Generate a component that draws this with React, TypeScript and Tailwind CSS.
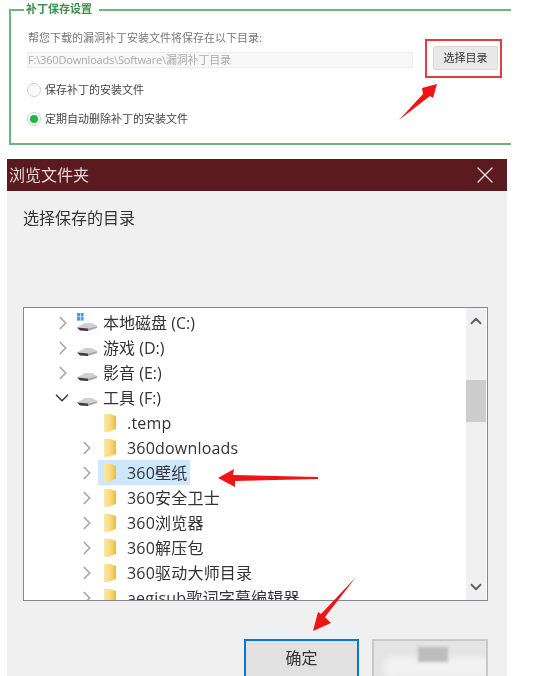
import { ChevronDown, ChevronRight, ChevronUp, X } from 'lucide-react';

type TreeRow = {
  label: string;
  kind: 'drive' | 'folder';
  open?: boolean;
  leaf?: boolean;
  selected?: boolean;
  win?: boolean;
};

const rows: TreeRow[] = [
  { label: '本地磁盘 (C:)', kind: 'drive', win: true },
  { label: '游戏 (D:)', kind: 'drive' },
  { label: '影音 (E:)', kind: 'drive' },
  { label: '工具 (F:)', kind: 'drive', open: true },
  { label: '.temp', kind: 'folder', leaf: true },
  { label: '360downloads', kind: 'folder' },
  { label: '360壁纸', kind: 'folder', selected: true },
  { label: '360安全卫士', kind: 'folder' },
  { label: '360浏览器', kind: 'folder' },
  { label: '360解压包', kind: 'folder' },
  { label: '360驱动大师目录', kind: 'folder' },
  { label: 'aegisub歌词字幕编辑器', kind: 'folder' },
];

function DriveIcon({ win }: { win?: boolean }) {
  return (
    <svg width="20" height="20" viewBox="0 0 20 20" className="shrink-0">
      {win && (
        <g fill="#29a8e8">
          <rect x="0" y="0" width="3" height="3.5" />
          <rect x="3.6" y="0" width="3" height="3.5" />
          <rect x="0" y="4.1" width="3" height="3.5" />
          <rect x="3.6" y="4.1" width="3" height="3.5" />
        </g>
      )}
      <path d="M0 14.5 L8 10 H15 L20 13 L11 15.5 Z" fill="#cfcfcf" />
      <path d="M0 14.5 L11 15.5 L11 18 L3 17.5 Z" fill="#3c3c3c" />
      <path d="M11 15.5 L20 13 V15 L11 18 Z" fill="#a8a8a8" />
    </svg>
  );
}

function FolderIcon() {
  return (
    <svg width="13" height="18" viewBox="0 0 13 18" className="shrink-0">
      <defs>
        <linearGradient id="folderFill" x1="0" y1="0" x2="1" y2="0">
          <stop offset="0" stopColor="#fbe8a8" />
          <stop offset="0.6" stopColor="#f8d675" />
          <stop offset="1" stopColor="#e9b93f" />
        </linearGradient>
      </defs>
      <path d="M0 0 H6 L12 2 V15 L4 18 H0 Z" fill="url(#folderFill)" />
    </svg>
  );
}

function Row({ row }: { row: TreeRow }) {
  const isDrive = row.kind === 'drive';
  return (
    <div className={`flex h-[25px] items-center ${isDrive ? 'pl-[32px]' : 'pl-[56px]'}`}>
      <span className="flex w-[17px] shrink-0 items-center justify-start">
        {row.open ? (
          <ChevronDown size={22} strokeWidth={1.8} className="-ml-[5px] shrink-0 text-[#404040]" />
        ) : row.leaf ? null : (
          <ChevronRight size={22} strokeWidth={1.8} className="-ml-[4px] shrink-0 text-[#a6a6a6]" />
        )}
      </span>
      {isDrive ? (
        <>
          <span className="mr-[6px] ml-[4px] flex items-center">
            <DriveIcon win={row.win} />
          </span>
          <span className="text-[16px] whitespace-nowrap text-[#333]">{row.label}</span>
        </>
      ) : (
        <span className={`ml-[1px] flex h-[25px] items-center pr-[3px] ${row.selected ? 'bg-[#cce8ff]' : ''}`}>
          <span className="mr-[10px] ml-[6px] flex">
            <FolderIcon />
          </span>
          <span className="text-[16px] tracking-[0.2px] whitespace-nowrap text-[#333]">{row.label}</span>
        </span>
      )}
    </div>
  );
}

function Radio({ on, label }: { on?: boolean; label: string }) {
  return (
    <div className="flex h-[20px] items-center gap-[4px]">
      <span className="flex h-[14px] w-[14px] items-center justify-center rounded-full border border-[#d0d0d0] bg-[#fafafa]">
        {on && <span className="h-[8px] w-[8px] rounded-full bg-[#1fb842]" />}
      </span>
      <span className="text-[11px] text-[#444]">{label}</span>
    </div>
  );
}

export default function App() {
  return (
    <div className="relative h-[676px] w-[541px] overflow-hidden bg-white [font-family:'Open_Sans','Noto_Sans_CJK_SC',sans-serif]">
      <section className="relative mt-[9px] ml-[9px] h-[136px] w-[502px] border-y-2 border-l-2 border-[#6db57f] pt-[19px] pl-[17px] blur-[0.4px]">
        <span className="absolute -top-[10px] left-[13px] bg-white pr-[7px] pl-[2px] text-[11px] leading-[16px] font-bold text-[#3f8f50]">
          补丁保存设置
        </span>
        <p className="text-[11px] leading-[16px] text-[#777]">帮您下载的漏洞补丁安装文件将保存在以下目录:</p>
        <div className="mt-[6px] flex items-start">
          <div className="-ml-[1px] h-[16px] w-[386px] border border-[#ececec] bg-[#f8f8f8] text-[11px] leading-[14px] tracking-[-0.18px] text-[#aaa]">
            F:\360Downloads\Software\漏洞补丁目录
          </div>
          <button className="-mt-[6px] ml-[20px] h-[24px] w-[65px] rounded-[2px] border border-[#d8d8d8] bg-[#e8e8e8] text-[11px] text-[#333]">
            选择目录
          </button>
        </div>
        <div className="mt-[10px] -ml-[1px] flex flex-col gap-[9px]">
          <Radio label="保存补丁的安装文件" />
          <Radio on label="定期自动删除补丁的安装文件" />
        </div>
      </section>

      <section className="mt-[14px] ml-[7px] h-[517px] w-[500px] bg-[#f0f0f0] blur-[0.3px]">
        <header className="flex h-[32px] items-center justify-between bg-[#5a1a20] pr-[8px] pl-[2px]">
          <span className="text-[16px] text-[#e6d6d6]">浏览文件夹</span>
          <X size={28} strokeWidth={1.1} className="text-[#f0e4e4]" />
        </header>
        <div className="pt-[16px] pl-[16px]">
          <h2 className="text-[16px] leading-[22px] font-normal text-[#333]">选择保存的目录</h2>
          <div className="mt-[78px] flex h-[294px] w-[465px] overflow-hidden border border-[#85888c] bg-white">
            <div className="min-w-0 flex-1 overflow-hidden pt-[2px]">
              {rows.map(r => (
                <Row key={r.label} row={r} />
              ))}
            </div>
            <div className="mr-[1px] flex w-[20px] shrink-0 flex-col items-center bg-[#f0f0f0]">
              <ChevronUp size={18} strokeWidth={2.5} className="mt-[4px] shrink-0 text-[#606060]" />
              <div className="mt-[50px] h-[42px] w-full shrink-0 bg-[#cdcdcd]" />
              <ChevronDown size={18} strokeWidth={2.5} className="mt-[156px] shrink-0 text-[#606060]" />
            </div>
          </div>
          <div className="mt-[38px] ml-[221px] flex gap-[13px]">
            <button className="h-[40px] w-[115px] border-2 border-[#0078d7] bg-[#e1e1e1] pb-[2px] text-[16px] text-[#333]">
              确定
            </button>
            <div className="relative h-[40px] w-[116px] overflow-hidden border-2 border-[#c8c8c8] bg-[#e4e4e4]">
              <div className="absolute top-[16px] left-[10px] h-[20px] w-[105px] rounded-[6px] bg-[#f2f2f2] blur-[3px]" />
              <div className="absolute top-[6px] left-[44px] h-[15px] w-[30px] bg-[#bdbdbd] blur-[1.5px]" />
            </div>
          </div>
        </div>
      </section>

      {/* annotation overlay: red box and the three arrows */}
      <div className="absolute top-[39px] left-[425px] h-[39px] w-[77px] border-2 border-[#e53a40]" />
      <svg width="541" height="676" viewBox="0 0 541 676" className="pointer-events-none absolute top-0 left-0">
        <g fill="#f01414">
          <polygon points="399,120 423,94 422,88 437,84 433,98 430,96" />
          <polygon points="218,478 234,469 233,475 318,477 318,479 235,481 235,487" />
          <polygon points="356,577 325,617 331,623 313,631 318,612 321,614" />
        </g>
      </svg>
    </div>
  );
}
